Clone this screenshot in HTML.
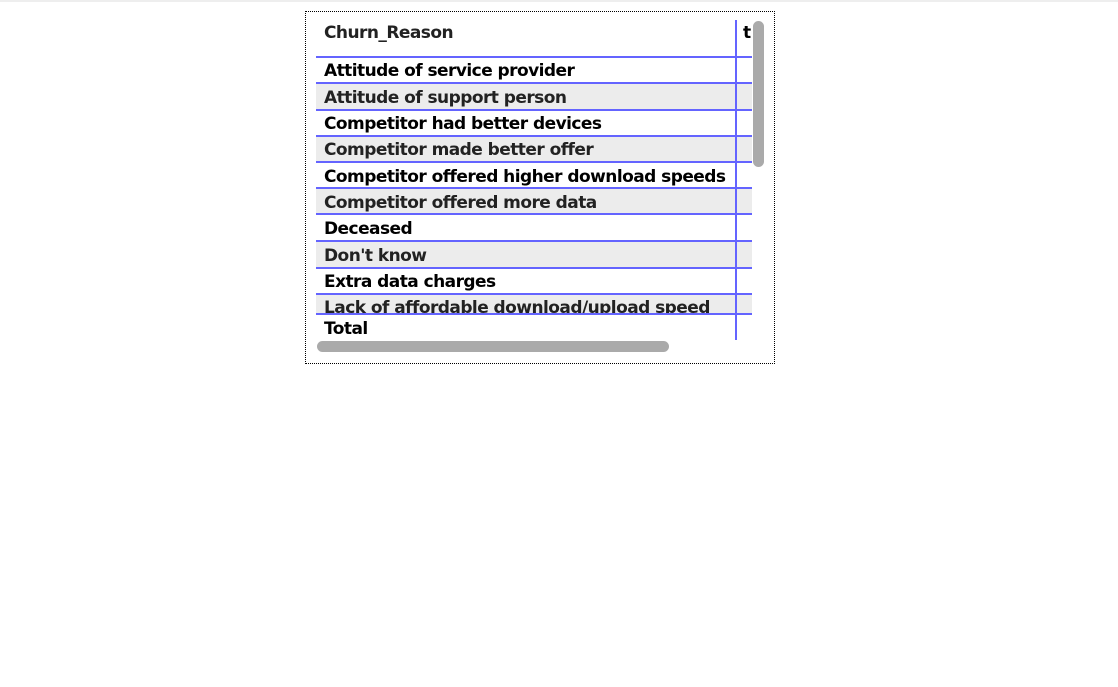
<html><head><style>
body{margin:0;width:1118px;height:687px;background:#fff;position:relative;overflow:hidden;font-family:"DejaVu Sans","Liberation Sans",sans-serif;font-weight:bold;font-size:17px;}
.top{position:absolute;left:0;top:0;width:1118px;height:2px;background:#eee}
.box{position:absolute;left:305px;top:11px;width:468px;height:351px;border:1px dotted #000;}
.h{position:absolute;left:316px;width:436px;height:2px;background:#6464ff;z-index:2}
.v{position:absolute;left:735px;top:20px;width:2px;height:320px;background:#6464ff;z-index:2}
.r{position:absolute;left:316px;width:436px;}
.t{position:absolute;left:324px;white-space:nowrap;color:#000;letter-spacing:-0.55px;}
.g{background:#ececec}
.gt{color:#222}
</style></head><body>
<div class="top"></div>
<div class="box"></div>
<div class="r g" style="top:84px;height:26px"></div>
<div class="r g" style="top:137px;height:25px"></div>
<div class="r g" style="top:189px;height:25px"></div>
<div class="r g" style="top:242px;height:26px"></div>
<div class="r g" style="top:295px;height:19px"></div>
<div class="t gt" style="top:23px;font-weight:600;color:#222">Churn_Reason</div>
<div class="t" style="left:743px;top:23px;width:9px;overflow:hidden">t</div>
<div class="t" style="top:61px">Attitude of service provider</div>
<div class="t gt" style="top:88px">Attitude of support person</div>
<div class="t" style="top:114px">Competitor had better devices</div>
<div class="t gt" style="top:140px">Competitor made better offer</div>
<div class="t" style="top:167px">Competitor offered higher download speeds</div>
<div class="t gt" style="top:193px">Competitor offered more data</div>
<div class="t" style="top:219px">Deceased</div>
<div class="t gt" style="top:246px">Don't know</div>
<div class="t" style="top:272px">Extra data charges</div>
<div class="t gt" style="top:298px;height:16px;overflow:hidden">Lack of affordable download/upload speed</div>
<div class="t" style="top:319px">Total</div>
<div class="h" style="top:56px"></div>
<div class="h" style="top:82px"></div>
<div class="h" style="top:109px"></div>
<div class="h" style="top:135px"></div>
<div class="h" style="top:161px"></div>
<div class="h" style="top:187px"></div>
<div class="h" style="top:213px"></div>
<div class="h" style="top:240px"></div>
<div class="h" style="top:267px"></div>
<div class="h" style="top:293px"></div>
<div class="h" style="top:313px"></div>
<div class="v"></div>
<div style="position:absolute;left:753px;top:21px;width:11px;height:146px;border-radius:6px;background:#aaa;z-index:3"></div>
<div style="position:absolute;left:317px;top:341px;width:352px;height:11px;border-radius:6px;background:#aaa"></div>
</body></html>
